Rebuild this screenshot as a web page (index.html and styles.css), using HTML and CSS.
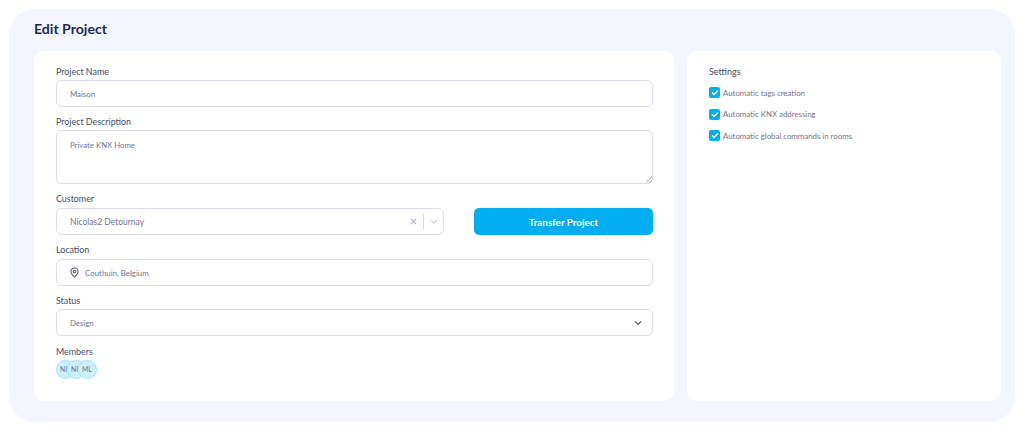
FILE: index.html
```html
<!DOCTYPE html>
<html lang="en">
<head>
    <meta charset="UTF-8">
    <meta name="viewport" content="width=device-width, initial-scale=1.0">
    <title>Edit Project</title>
    <link rel="stylesheet" href="styles.css">
</head>
<body>
    <div class="panel">
        <h1>Edit Project</h1>
        <div class="cards">
            <!-- main form -->
            <form class="card form-card">
                <div class="form-group">
                    <label for="name">Project Name</label>
                    <input class="control" type="text" id="name" value="Maison">
                </div>
                <div class="form-group">
                    <label for="description">Project Description</label>
                    <textarea class="control" id="description">Private KNX Home</textarea>
                </div>
                <div class="customer-row">
                    <div class="form-group tall-label">
                        <label>Customer</label>
                        <div class="control picker">
                            <span class="picker-value">Nicolas2 Detournay</span>
                            <svg class="clear-icon" width="7" height="7" viewBox="0 0 8 8"><path d="M1 1l6 6M7 1L1 7"/></svg>
                            <span class="picker-sep"></span>
                            <svg class="picker-arrow" width="8" height="5" viewBox="0 0 10 6"><path d="M1 1l4 4 4-4"/></svg>
                        </div>
                    </div>
                    <button type="button" class="transfer-btn">Transfer Project</button>
                </div>
                <div class="form-group tall-label">
                    <label for="location">Location</label>
                    <div class="control location">
                        <svg class="pin-icon" width="9" height="11" viewBox="0 0 10 12"><path d="M5 11C2.600 8.900 1 7.100 1 5a4 4 0 0 1 8 0c0 2.100-1.600 3.900-4 6z"/><circle cx="5" cy="5" r="1.500"/></svg>
                        <input type="text" id="location" value="Couthuin, Belgium">
                    </div>
                </div>
                <div class="form-group">
                    <label>Status</label>
                    <div class="control status">
                        <span>Design</span>
                        <svg class="status-arrow" width="8" height="6" viewBox="0 0 8 6"><path d="M1 1.500l3 3 3-3"/></svg>
                    </div>
                </div>
                <div class="form-group members-group">
                    <label>Members</label>
                    <div class="members">
                        <span class="avatar">NI</span>
                        <span class="avatar">NI</span>
                        <span class="avatar">ML</span>
                    </div>
                </div>
            </form>

            <!-- settings -->
            <div class="card settings-card">
                <h2>Settings</h2>
                <div class="check-row">
                    <span class="check"><svg width="8" height="7" viewBox="0 0 8 7"><path d="M1 3.500l2 2 4-4"/></svg></span>
                    Automatic tags creation
                </div>
                <div class="check-row">
                    <span class="check"><svg width="8" height="7" viewBox="0 0 8 7"><path d="M1 3.500l2 2 4-4"/></svg></span>
                    Automatic KNX addressing
                </div>
                <div class="check-row">
                    <span class="check"><svg width="8" height="7" viewBox="0 0 8 7"><path d="M1 3.500l2 2 4-4"/></svg></span>
                    Automatic global commands in rooms
                </div>
            </div>
        </div>
    </div>
</body>
</html>
```

FILE: styles.css
```css
* {
    box-sizing: border-box;
}

body {
    font-family: 'Lato', 'Liberation Sans', sans-serif;
    background-color: #fff;
    margin: 0;
    padding: 9px;
    color: #454b66;
}

.panel {
    width: 1006px;
    height: 413px;
    padding: 0 14px 21px 25px;
    background: #f3f6ff;
    border-radius: 26px;
    display: flex;
    flex-direction: column;
}

h1 {
    margin: 0;
    height: 42px;
    line-height: 40px;
    font-size: 14.100px;
    font-weight: 700;
    color: #1f2a50;
}

.cards {
    flex: 1;
    display: grid;
    grid-template-columns: 640px 314px;
    gap: 13px;
}

.card {
    background: #fff;
    border-radius: 10px;
}

.form-card {
    padding: 12px 21px 0 22px;
}

.form-group {
    margin-bottom: 6px;
}

label {
    display: block;
    height: 17px;
    line-height: 17px;
    font-size: 8.900px;
    color: #454b66;
}

.tall-label label {
    height: 18px;
    line-height: 18px;
}

.members-group label {
    line-height: 20px;
}

.control {
    display: block;
    width: 100%;
    height: 27px;
    padding: 0 13px;
    border: 1px solid #d9dcec;
    border-radius: 6px;
    background: #fff;
    font-family: inherit;
    font-size: 7.800px;
    color: #70748c;
    outline: none;
}

textarea.control {
    height: 54px;
    padding-top: 8px;
    line-height: 12px;
    margin: 0;
}

textarea.control::-webkit-resizer {
    background: linear-gradient(135deg, transparent 50%, #c2c5d2 50%, #c2c5d2 62%, transparent 62%, transparent 75%, #c2c5d2 75%, #c2c5d2 87%, transparent 87%) no-repeat right bottom / 7px 7px;
}

.customer-row {
    display: grid;
    grid-template-columns: 388px 179px;
    gap: 30px;
    align-items: end;
    margin-bottom: 6px;
}

.customer-row .form-group {
    margin-bottom: 0;
}

.picker, .status, .location {
    display: flex;
    align-items: center;
}

.picker {
    padding-right: 5px;
    font-size: 8.500px;
}

.picker-value {
    flex: 1;
}

.clear-icon path {
    fill: none;
    stroke: #b4b7c4;
    stroke-width: 1.500;
}

.picker-sep {
    width: 1px;
    height: 17px;
    margin: 0 6px 0 6px;
    background: #d9dcec;
}

.picker-arrow path {
    fill: none;
    stroke: #c4c7d2;
    stroke-width: 1.300;
}

.transfer-btn {
    height: 27px;
    padding: 0;
    border: none;
    border-radius: 5px;
    background-color: #00adf0;
    font-family: inherit;
    font-size: 9.900px;
    font-weight: 700;
    color: #f2fbff;
}

.location input {
    flex: 1;
    border: none;
    outline: none;
    padding: 0;
    margin-left: 6px;
    font-family: inherit;
    font-size: 7.900px;
    color: #70748c;
}

.pin-icon path, .pin-icon circle {
    fill: none;
    stroke: #5a5e6c;
    stroke-width: 1.200;
}

.status {
    justify-content: space-between;
    padding-right: 10px;
}

.status-arrow path {
    fill: none;
    stroke: #5a5e6c;
    stroke-width: 1.200;
}

.members {
    display: flex;
    padding-top: 1px;
}

.avatar {
    width: 19px;
    height: 19px;
    margin-right: -8px;
    padding-left: 3px;
    border: 1px solid #a6e2fb;
    border-radius: 50%;
    background: #ccf0fe;
    font-size: 6.800px;
    line-height: 17px;
    white-space: nowrap;
    color: #66758a;
    overflow: hidden;
}

.settings-card {
    padding: 13px 22px;
}

h2 {
    margin: 0 0 8px;
    height: 15px;
    line-height: 15px;
    font-size: 9px;
    font-weight: 400;
    color: #454b66;
}

.check-row {
    display: flex;
    align-items: center;
    height: 11px;
    margin-bottom: 10.500px;
    font-size: 7.850px;
    color: #70748c;
}

.check {
    display: flex;
    align-items: center;
    justify-content: center;
    width: 11px;
    height: 11px;
    margin-right: 3px;
    border-radius: 2px;
    background: #00adf0;
}

.check path {
    fill: none;
    stroke: #fff;
    stroke-width: 1.500;
}
```
